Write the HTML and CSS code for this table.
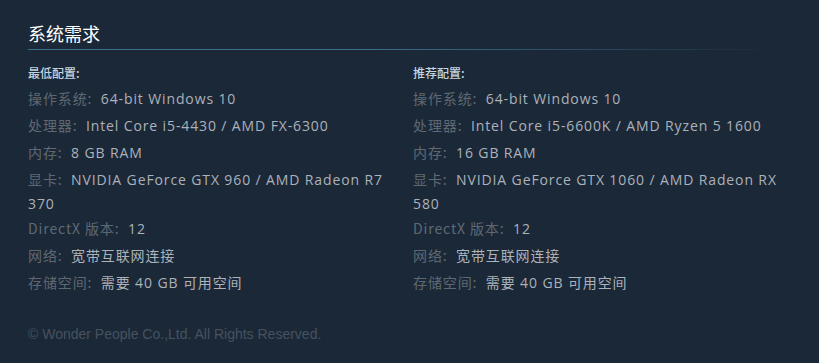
FILE: index.html
```html
<!DOCTYPE html>
<html lang="zh-CN">
<head>
<meta charset="utf-8">
<link rel="stylesheet" href="styles.css">
</head>
<body>
<div class="page">
  <div class="sysreq">
    <h2 class="title">系统需求</h2>
    <div class="rule"></div>
    <div class="cols">
      <div class="col">
        <div class="col-head">最低配置:</div>
        <ul class="list">
          <li><span class="label">操作系统:</span> 64-bit Windows 10</li>
          <li><span class="label">处理器:</span> Intel Core i5-4430 / AMD FX-6300</li>
          <li><span class="label">内存:</span> 8 GB RAM</li>
          <li><span class="label">显卡:</span> NVIDIA GeForce GTX 960 / AMD Radeon R7 370</li>
          <li><span class="label">DirectX 版本:</span> 12</li>
          <li><span class="label">网络:</span> 宽带互联网连接</li>
          <li><span class="label">存储空间:</span> 需要 40 GB 可用空间</li>
        </ul>
      </div>
      <div class="col">
        <div class="col-head">推荐配置:</div>
        <ul class="list">
          <li><span class="label">操作系统:</span> 64-bit Windows 10</li>
          <li><span class="label">处理器:</span> Intel Core i5-6600K / AMD Ryzen 5 1600</li>
          <li><span class="label">内存:</span> 16 GB RAM</li>
          <li><span class="label">显卡:</span> NVIDIA GeForce GTX 1060 / AMD Radeon RX 580</li>
          <li><span class="label">DirectX 版本:</span> 12</li>
          <li><span class="label">网络:</span> 宽带互联网连接</li>
          <li><span class="label">存储空间:</span> 需要 40 GB 可用空间</li>
        </ul>
      </div>
    </div>
  </div>
  <div class="footer">© Wonder People Co.,Ltd. All Rights Reserved.</div>
</div>
</body>
</html>
```

FILE: styles.css
```css
html, body {
  margin: 0;
  padding: 0;
  background: #1b2838;
}
body {
  font-family: "Open Sans", "Noto Sans CJK SC", sans-serif;
  color: #acb2b8;
}
.page {
  padding: 21px 28px 0 28px;
}
.sysreq {
  width: 755px;
}
.title {
  margin: 0;
  font-size: 18px;
  line-height: 24px;
  font-weight: normal;
  color: #ffffff;
  font-family: "Noto Sans CJK SC", sans-serif;
}
.rule {
  height: 1px;
  margin-top: 4px;
  background: linear-gradient(to right, #3b6e8c 0%, #3b6e8c 45%, rgba(59, 110, 140, 0) 100%);
}
.cols {
  display: flex;
  justify-content: space-between;
  margin-top: 15px;
}
.col {
  width: 370px;
}
.col-head {
  font-size: 12px;
  line-height: 16px;
  font-weight: 500;
  color: #c6d4df;
  font-family: "Noto Sans CJK SC", sans-serif;
  margin-bottom: 4px;
}
.list {
  list-style: none;
  margin: 0;
  padding: 0;
  font-size: 14px;
  line-height: 22px;
  letter-spacing: 0.88px;
}
.list li {
  margin: 0;
}
.label {
  color: #5f6872;
  line-height: 27px;
  margin-right: 4px;
  font-family: "Noto Sans CJK SC", sans-serif;
}
.footer {
  margin-top: 30px;
  font-family: "Liberation Sans", Arial, sans-serif;
  font-size: 14px;
  line-height: 16px;
  color: #46525e;
}
```
